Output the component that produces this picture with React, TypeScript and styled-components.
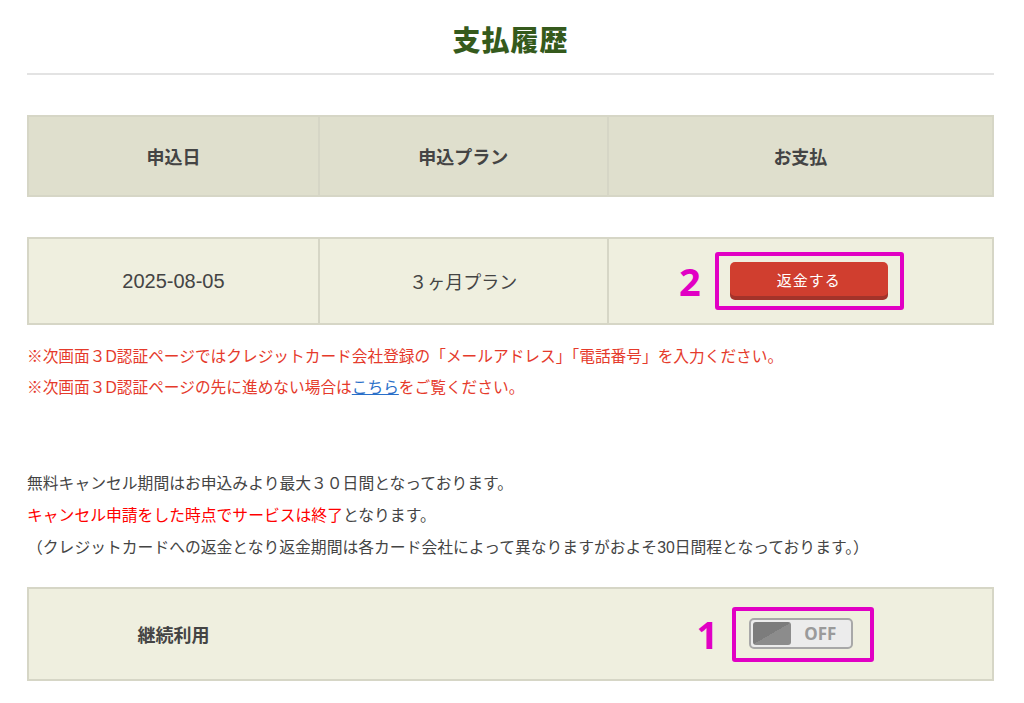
import React from "react";
import styled, { createGlobalStyle } from "styled-components";

const GlobalStyle = createGlobalStyle`
  body {
    margin: 0;
    background: #fff;
    font-family: "Liberation Sans", "Noto Sans CJK JP", sans-serif;
    color: #444;
  }
`;

const Page = styled.div`
  width: 967px;
  margin-left: 27px;
`;

const Title = styled.h1`
  margin: 0;
  padding: 24px 0 13px;
  line-height: 36px;
  font-size: 28px;
  font-weight: 900;
  text-align: center;
  color: #355a1c;
  border-bottom: 2px solid #e3e3e3;
  letter-spacing: 1px;
`;

const Row = styled.div<{ $head?: boolean; $height: number; $top: number }>`
  display: grid;
  grid-template-columns: 30% 30% 40%;
  height: ${({ $height }) => $height}px;
  margin-top: ${({ $top }) => $top}px;
  box-sizing: border-box;
  background: ${({ $head }) => ($head ? "#dfdfcd" : "#efefdf")};
  border: 2px solid #d6d6c6;
`;

const Cell = styled.div<{ $bold?: boolean; $divider?: boolean; $shift?: number; $size?: number }>`
  display: flex;
  align-items: center;
  justify-content: center;
  font-size: ${({ $size }) => $size ?? 18}px;
  font-weight: ${({ $bold }) => ($bold ? 700 : 400)};
  color: #444;
  border-left: ${({ $divider }) => ($divider ? "2px solid #d6d6c6" : "none")};
  padding-right: ${({ $shift }) => $shift ?? 0}px;
`;

const Mark = styled.span`
  font-family: "Noto Sans", "Liberation Sans", sans-serif;
  font-weight: 700;
  font-size: 38px;
  line-height: 1;
  color: #e100c4;
  margin-right: 14px;
`;

const Frame = styled.div<{ $pad: string }>`
  border: 4px solid #e100c4;
  border-radius: 3px;
  padding: ${({ $pad }) => $pad};
  display: flex;
`;

const RefundButton = styled.button`
  width: 158px;
  height: 34px;
  margin-bottom: 4px;
  border: none;
  border-radius: 5px;
  background: #d03e2f;
  box-shadow: 0 4px 0 #a3332a;
  color: #fff;
  font-family: "Liberation Sans", "Noto Sans CJK JP", sans-serif;
  font-size: 15px;
  letter-spacing: 1px;
  cursor: pointer;
`;

const Notes = styled.div`
  margin-top: 16px;
  font-size: 15.7px;
  line-height: 31px;
  color: #e53a2b;
`;

const Link = styled.a`
  color: #2a6fc9;
  text-decoration: underline;
`;

const Info = styled.div`
  margin-top: 65px;
  font-size: 15.8px;
  line-height: 32px;
  color: #444;
`;

const Red = styled.span`
  color: #f00;
`;

const Toggle = styled.div`
  width: 104px;
  height: 31px;
  box-sizing: border-box;
  border: 2px solid #a8a8a8;
  border-radius: 5px;
  background: #ececec;
  display: flex;
  align-items: center;
  padding: 2px;
`;

const Knob = styled.div`
  width: 38px;
  height: 100%;
  border-radius: 3px;
  background: linear-gradient(150deg, #7c7c7c 50%, #8c8c8c 50%);
`;

const ToggleLabel = styled.span`
  flex: 1;
  text-align: center;
  font-family: "Noto Sans", "Liberation Sans", sans-serif;
  font-weight: 700;
  font-size: 17px;
  color: #9a9a9a;
`;

export default function App() {
  return (
    <>
      <GlobalStyle />
      <Page>
        <Title>支払履歴</Title>

        <Row $head $height={82} $top={40}>
          <Cell $bold>申込日</Cell>
          <Cell $bold $divider>申込プラン</Cell>
          <Cell $bold $divider>お支払</Cell>
        </Row>

        <Row $height={88} $top={40}>
          <Cell $size={20}>2025-08-05</Cell>
          <Cell $divider>３ヶ月プラン</Cell>
          <Cell $divider $shift={18}>
            <Mark>2</Mark>
            <Frame $pad="6px 12px 6px 11px">
              <RefundButton>返金する</RefundButton>
            </Frame>
          </Cell>
        </Row>

        <Notes>
          <div>※次画面３D認証ページではクレジットカード会社登録の「メールアドレス」「電話番号」を入力ください。</div>
          <div>
            ※次画面３D認証ページの先に進めない場合は<Link href="#">こちら</Link>をご覧ください。
          </div>
        </Notes>

        <Info>
          <div>無料キャンセル期間はお申込みより最大３０日間となっております。</div>
          <div>
            <Red>キャンセル申請をした時点でサービスは終了</Red>となります。
          </div>
          <div>（クレジットカードへの返金となり返金期間は各カード会社によって異なりますがおよそ30日間程となっております。）</div>
        </Info>

        <Row $height={94} $top={23}>
          <Cell $bold>継続利用</Cell>
          <Cell />
          <Cell $shift={28}>
            <Mark>1</Mark>
            <Frame $pad="7px 17px 9px 13px">
              <Toggle>
                <Knob />
                <ToggleLabel>OFF</ToggleLabel>
              </Toggle>
            </Frame>
          </Cell>
        </Row>
      </Page>
    </>
  );
}
